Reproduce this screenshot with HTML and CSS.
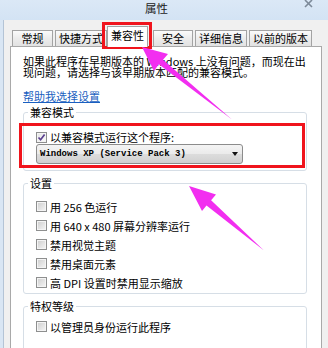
FILE: index.html
```html
<!DOCTYPE html>
<html lang="zh-CN">
<head>
<meta charset="utf-8">
<title>属性</title>
<link rel="stylesheet" href="styles.css">
</head>
<body>
<div class="win">
  <div class="titlebar">
    <span class="title">属性</span>
    <svg class="close" width="9" height="8" viewBox="0 0 9 8"><path d="M1 0 L8 7 M8 0 L1 7" stroke="#7d8a99" stroke-width="1.6" fill="none"/></svg>
  </div>
  <div class="frame">
    <div class="dlg">
      <div class="tabs">
        <div class="tab tab-short">常规</div>
        <div class="tab">快捷方式</div>
        <div class="tab tab-sel">兼容性</div>
        <div class="tab tab-short2">安全</div>
        <div class="tab">详细信息</div>
        <div class="tab">以前的版本</div>
      </div>
      <div class="page">
        <p class="intro">如果此程序在早期版本的 Windows 上没有问题，而现在出<br>现问题，请选择与该早期版本匹配的兼容模式。</p>
        <a class="link" href="#">帮助我选择设置</a>

        <fieldset class="grp grp-compat">
          <legend>兼容模式</legend>
          <div class="grp-body">
            <div class="row row-tight"><span class="cb cb-on"><svg width="9" height="9" viewBox="0 0 9 9"><path d="M1.5 4.5 L3.6 6.8 L7.6 1.6" stroke="#5a3f8e" stroke-width="1.7" fill="none"/></svg></span>以兼容模式运行这个程序:</div>
            <div class="select"><span class="select-text">Windows XP (Service Pack 3)</span><span class="caret"></span></div>
          </div>
        </fieldset>

        <fieldset class="grp grp-settings">
          <legend>设置</legend>
          <div class="grp-body">
            <div class="row"><span class="cb"></span>用 256 色运行</div>
            <div class="row"><span class="cb"></span>用 640 x 480 屏幕分辨率运行</div>
            <div class="row"><span class="cb"></span>禁用视觉主题</div>
            <div class="row"><span class="cb"></span>禁用桌面元素</div>
            <div class="row"><span class="cb"></span>高 DPI 设置时禁用显示缩放</div>
          </div>
        </fieldset>

        <fieldset class="grp grp-priv">
          <legend>特权等级</legend>
          <div class="grp-body">
            <div class="row"><span class="cb"></span>以管理员身份运行此程序</div>
          </div>
        </fieldset>
      </div>
    </div>
  </div>

  <div class="mark mark-tab"></div>
  <div class="mark mark-mode"></div>
  <svg class="arrows" width="328" height="348" viewBox="0 0 328 348">
    <polygon fill="#f22ef0" points="142,47 168,54 163,59.7 232,119.5 158.8,64.3 154,71"/>
    <polygon fill="#f22ef0" points="189,186 216,194.5 211.1,200.2 264,250.5 206.5,205.6 202,211"/>
  </svg>
</div>
</body>
</html>
```
FILE: styles.css
```css
* { box-sizing: border-box; }
html, body { margin: 0; padding: 0; }
body {
  width: 328px;
  height: 348px;
  overflow: hidden;
  background: #d9e6f4;
  font-family: "Noto Sans CJK SC", "Noto Sans", sans-serif;
  font-size: 11px;
  color: #000;
}
.win {
  position: relative;
  width: 328px;
  height: 348px;
  display: flex;
  flex-direction: column;
}
.titlebar {
  position: relative;
  height: 20px;
  flex: none;
  display: flex;
  justify-content: center;
  align-items: flex-start;
  background: linear-gradient(#dbe8f6, #d3e3f4);
}
.title {
  margin-left: -15px;
  font-size: 11.5px;
  line-height: 16px;
  color: #1a1a1a;
}
.close {
  position: absolute;
  top: 0;
  right: 15px;
}
.frame {
  flex: 1;
  display: flex;
  padding-left: 3px;
  min-height: 0;
}
.dlg {
  flex: 1;
  display: flex;
  flex-direction: column;
  background: #f0f0f0;
  border-left: 1px solid #b4c4d6;
  padding: 0 6px 0 6px;
  min-height: 0;
}
.tabs {
  display: flex;
  align-items: flex-end;
  gap: 2px;
  height: 26px;
  padding-left: 2px;
  flex: none;
}
.tab {
  height: 16px;
  padding: 0 3px;
  border: 1px solid #a3a3a3;
  border-bottom: none;
  background: linear-gradient(#fbfbfb, #ececec 50%, #e2e2e2);
  line-height: 14px;
  text-align: center;
  white-space: nowrap;
}
.tab-short { min-width: 41px; }
.tab-short2 { min-width: 40px; }
.tab-sel {
  position: relative;
  z-index: 1;
  height: 21px;
  margin: 0 3px -1px -2px;
  min-width: 40px;
  background: #fff;
  line-height: 17px;
}
.page {
  flex: 1;
  background: #fff;
  border: 1px solid #a9a9a9;
  border-bottom: none;
  padding: 9px 14px 0 12px;
}
.intro {
  margin: 0;
  line-height: 11px;
  white-space: nowrap;
}
.link {
  display: block;
  margin-top: 13px;
  line-height: 11px;
  color: #1a5fc0;
  text-decoration: underline;
  width: max-content;
}
.grp {
  margin: 0;
  padding: 0 0 0 4px;
  border: 1px solid #d6dee6;
  border-radius: 3px;
  min-width: 0;
}
.grp legend {
  padding: 0 2px;
  line-height: 11px;
}
.grp-body { padding-left: 8px; }
.grp-compat { margin-top: 5px; padding-bottom: 6px; }
.grp-compat .grp-body { padding-top: 12px; }
.grp-settings { margin-top: 7px; padding-bottom: 1px; }
.grp-settings .grp-body { padding-top: 8px; }
.grp-priv { margin-top: 7px; height: 60px; }
.grp-priv .grp-body { padding-top: 5px; }
.row {
  display: flex;
  align-items: center;
  height: 19px;
  white-space: nowrap;
}
.row-tight { height: 14px; }
.cb {
  flex: none;
  width: 11px;
  height: 11px;
  margin-right: 3px;
  border: 1px solid #8e8f8f;
  background: linear-gradient(135deg, #cdcdcd, #f6f6f6);
  box-shadow: inset 0 0 0 1px #f4f4f4;
  display: flex;
  align-items: center;
  justify-content: center;
}
.cb-on { background: linear-gradient(135deg, #e4e4e4, #fbfbfb); }
.select {
  width: 207px;
  height: 20px;
  border: 1px solid #8c8c8c;
  border-radius: 3px;
  background: linear-gradient(#f4f4f4, #ebebeb 48%, #dcdcdc 52%, #d0d0d0);
  display: flex;
  align-items: center;
  justify-content: space-between;
  padding: 0 3px 0 3px;
}
.select-text {
  font-family: "Liberation Mono", monospace;
  font-size: 9px;
  font-weight: bold;
  white-space: nowrap;
}
.caret {
  width: 0;
  height: 0;
  margin-right: 1px;
  border-left: 3.5px solid transparent;
  border-right: 3.5px solid transparent;
  border-top: 4px solid #111;
}
.mark {
  position: absolute;
  border: 3px solid #f0141c;
  pointer-events: none;
}
.mark-tab { left: 102px; top: 22px; width: 50px; height: 27px; }
.mark-mode { left: 19px; top: 123px; width: 286px; height: 45px; }
.arrows {
  position: absolute;
  left: 0;
  top: 0;
  pointer-events: none;
}
```
